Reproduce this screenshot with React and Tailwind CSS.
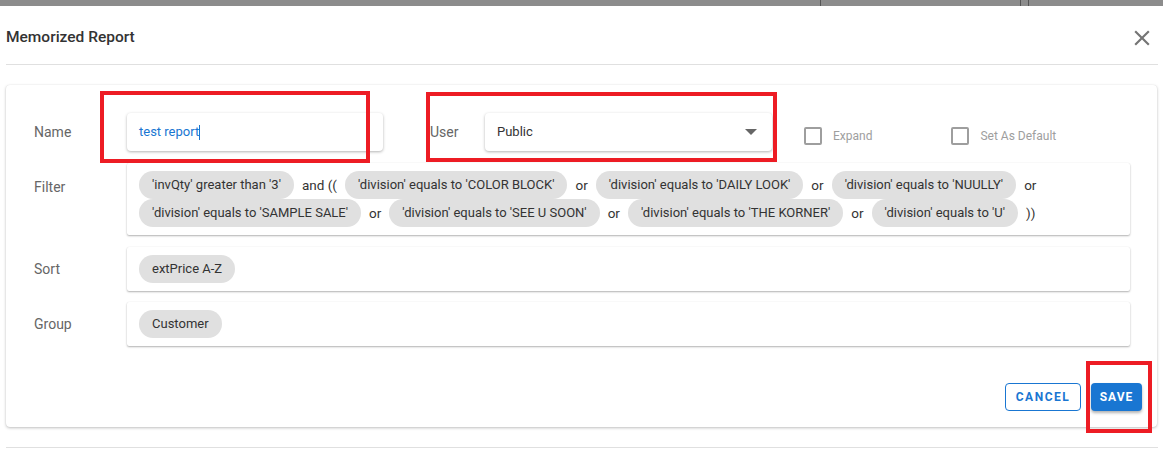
import { useState } from 'react';

const FILTER_ITEMS = [
  { chip: "'invQty' greater than '3'" },
  { text: 'and ((' },
  { chip: "'division' equals to 'COLOR BLOCK'" },
  { text: 'or' },
  { chip: "'division' equals to 'DAILY LOOK'" },
  { text: 'or' },
  { chip: "'division' equals to 'NUULLY'" },
  { text: 'or' },
  { chip: "'division' equals to 'SAMPLE SALE'" },
  { text: 'or' },
  { chip: "'division' equals to 'SEE U SOON'" },
  { text: 'or' },
  { chip: "'division' equals to 'THE KORNER'" },
  { text: 'or' },
  { chip: "'division' equals to 'U'" },
  { text: '))' },
];

function Chip({ label }) {
  return (
    <span className="h-[28px] px-[13px] rounded-full bg-[#e0e0e0] text-[13px] text-[#333] flex items-center whitespace-nowrap">
      {label}
    </span>
  );
}

function FieldLabel({ children }) {
  return <div className="w-[93px] shrink-0 text-[14px] text-[#666]">{children}</div>;
}

function ChipBox({ children }) {
  return (
    <div className="w-[1003px] min-h-[44px] bg-white rounded-[2px] shadow-[0_1px_2px_rgba(0,0,0,0.3),0_0_1px_rgba(0,0,0,0.08)] px-3 py-2 flex flex-wrap items-center gap-x-2">
      {children}
    </div>
  );
}

function Checkbox({ label, checked, onChange }) {
  return (
    <label className="flex items-center gap-[11px] cursor-pointer">
      <span
        onClick={onChange}
        className={
          checked
            ? 'w-[18px] h-[18px] rounded-[2px] bg-[#1976d2] border-2 border-[#1976d2]'
            : 'w-[18px] h-[18px] rounded-[2px] border-2 border-[#9e9e9e]'
        }
      />
      <span className="text-[12px] text-[#9e9e9e]">{label}</span>
    </label>
  );
}

export default function App() {
  const [expand, setExpand] = useState(false);
  const [isDefault, setIsDefault] = useState(false);

  return (
    <div className="relative w-[1163px] h-[449px] bg-white overflow-hidden" style={{ fontFamily: 'Roboto, "Liberation Sans", sans-serif' }}>
      {/* table header strip peeking above the dialog */}
      <div className="h-[6px] bg-[#8c8c8c] flex">
        <div className="w-[821px] border-r border-[#555]" />
        <div className="w-[200px] border-r border-[#555]" />
        <div className="w-[8px] border-r border-[#555]" />
      </div>

      <div className="h-[58px] pl-[6px] pr-[8px] pt-[6px] flex items-center justify-between">
        <h2 className="text-[15.5px] font-medium text-[#333]">Memorized Report</h2>
        <button className="w-[26px] h-[26px] flex items-center justify-center text-[#757575]">
          <svg width="26" height="26" viewBox="0 0 24 24" fill="currentColor">
            <path d="M19 6.41L17.59 5 12 10.59 6.41 5 5 6.41 10.59 12 5 17.59 6.41 19 12 13.41 17.59 19 19 17.59 13.41 12z" />
          </svg>
        </button>
      </div>
      <div className="ml-[6px] mr-[5px] border-b border-[#e0e0e0]" />

      <div className="mt-[20px] ml-[6px] mr-[6px] h-[342px] bg-white rounded-[4px] shadow-[0_1px_3px_rgba(0,0,0,0.25),0_0_1px_rgba(0,0,0,0.1)] pl-[28px] pr-[15px] pt-[28px] pb-[16px] flex flex-col">
        <div className="flex items-center h-[38px]">
          <FieldLabel>Name</FieldLabel>
          <div className="w-[256px] h-[38px] bg-white rounded-[4px] shadow-[0_1px_3px_rgba(0,0,0,0.3)] flex items-center px-3">
            <span className="text-[13px] text-[#1976d2]">test report</span>
            <span className="w-[1px] h-[15px] bg-[#1976d2]" />
          </div>
          <div className="ml-[47px] w-[55px] text-[14px] text-[#666]">User</div>
          <div className="w-[287px] h-[38px] bg-white rounded-[4px] shadow-[0_1px_3px_rgba(0,0,0,0.3)] flex items-center justify-between pl-3 pr-[15px]">
            <span className="text-[13px] text-[#333]">Public</span>
            <svg width="12" height="6" viewBox="0 0 10 5" fill="#666">
              <path d="M0 0l5 5 5-5z" />
            </svg>
          </div>
          <div className="ml-[32px] mt-[8px] flex items-center gap-[79px]">
            <Checkbox label="Expand" checked={expand} onChange={() => setExpand(!expand)} />
            <Checkbox label="Set As Default" checked={isDefault} onChange={() => setIsDefault(!isDefault)} />
          </div>
        </div>

        <div className="mt-[12px] flex items-start">
          <div className="w-[93px] pt-[14px] text-[14px] text-[#666]">Filter</div>
          <ChipBox>
            {FILTER_ITEMS.map((item, i) =>
              item.chip ? (
                <Chip key={i} label={item.chip} />
              ) : (
                <span key={i} className="text-[13.5px] text-[#333]">{item.text}</span>
              )
            )}
          </ChipBox>
        </div>

        <div className="mt-[12px] flex items-center">
          <FieldLabel>Sort</FieldLabel>
          <ChipBox>
            <Chip label="extPrice A-Z" />
          </ChipBox>
        </div>

        <div className="mt-[11px] flex items-center">
          <FieldLabel>Group</FieldLabel>
          <ChipBox>
            <Chip label="Customer" />
          </ChipBox>
        </div>

        <div className="mt-auto flex justify-end gap-[10px]">
          <button className="w-[76px] h-[28px] rounded-[4px] border border-[#1976d2] text-[#1976d2] text-[12px] font-bold tracking-[1.5px]">
            CANCEL
          </button>
          <button className="w-[51px] h-[28px] rounded-[4px] bg-[#1976d2] text-white text-[12px] font-bold tracking-[1px] shadow-[0_2px_3px_rgba(0,0,0,0.3)]">
            SAVE
          </button>
        </div>
      </div>

      <div className="mt-[20px] ml-[6px] mr-[5px] border-b border-[#e0e0e0]" />

      {/* review markers */}
      <div className="absolute left-[100px] top-[91px] w-[270px] h-[72px] border-4 border-[#ed1c24] pointer-events-none" />
      <div className="absolute left-[426px] top-[92px] w-[351px] h-[70px] border-4 border-[#ed1c24] pointer-events-none" />
      <div className="absolute left-[1086px] top-[361px] w-[66px] h-[72px] border-4 border-[#ed1c24] pointer-events-none" />
    </div>
  );
}
